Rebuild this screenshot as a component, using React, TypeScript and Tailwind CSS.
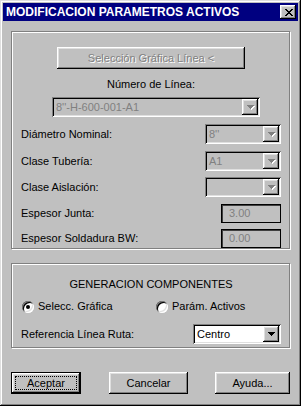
import React from "react";

const FONT = "font-['Liberation_Sans',Arial,sans-serif]";
const RAISED =
  "shadow-[inset_-1px_-1px_#000,inset_1px_1px_#fff,inset_-2px_-2px_#808080,inset_2px_2px_#dfdfdf]";
const SUNKEN =
  "shadow-[inset_1px_1px_#808080,inset_-1px_-1px_#fff,inset_2px_2px_#000,inset_-2px_-2px_#dfdfdf]";
const GROUP = "border border-[#808080] shadow-[inset_1px_1px_#fff,1px_1px_#fff]";
const DISABLED_TXT = "text-[#808080] [text-shadow:1px_1px_0_#fff]";

function Tri({ disabled }: { disabled?: boolean }) {
  const d = "M0 0h7v1h-1v1h-1v1h-1v1h-1v-1h-1v-1h-1v-1h-1z";
  return (
    <svg width="8" height="5" viewBox="0 0 8 5" shapeRendering="crispEdges">
      {disabled && <path d={d} fill="#fff" transform="translate(1 1)" />}
      <path d={d} fill={disabled ? "#808080" : "#000"} />
    </svg>
  );
}

function ArrowBtn({ disabled }: { disabled?: boolean }) {
  return (
    <div className={`w-[16px] h-[16px] bg-[#c0c0c0] ${RAISED} flex items-center justify-center pl-[1px] pt-[1px]`}>
      <Tri disabled={disabled} />
    </div>
  );
}

function Combo({
  value,
  disabled,
  className,
}: {
  value: string;
  disabled?: boolean;
  className?: string;
}) {
  return (
    <div
      className={`h-[20px] ${SUNKEN} ${disabled ? "bg-[#c0c0c0]" : "bg-white"} flex items-center pr-[2px] ${className ?? ""}`}
    >
      <span className={`flex-1 pl-[4px] leading-[13px] ${disabled ? "text-[#808080]" : "text-black"} whitespace-nowrap overflow-hidden`}>
        {value}
      </span>
      <ArrowBtn disabled={disabled} />
    </div>
  );
}

function Edit({ value }: { value: string }) {
  return (
    <div className="w-[60px] h-[19px] border border-black shadow-[inset_1px_1px_#404040] bg-[#c0c0c0] flex items-center pl-[7px] text-[#808080] leading-[13px]">
      {value}
    </div>
  );
}

function Radio({ checked }: { checked?: boolean }) {
  return (
    <div
      className={`w-[12px] h-[12px] rounded-full bg-white shadow-[inset_1px_1px_#808080,inset_-1px_-1px_#fff,inset_2px_2px_#000,inset_-2px_-2px_#dfdfdf] flex items-center justify-center`}
    >
      {checked && <div className="w-[4px] h-[4px] rounded-full bg-black" />}
    </div>
  );
}

function CloseX() {
  const rows = [
    [0, 1, 6, 7],
    [1, 2, 5, 6],
    [2, 3, 4, 5],
    [3, 4],
    [2, 3, 4, 5],
    [1, 2, 5, 6],
    [0, 1, 6, 7],
  ];
  return (
    <svg width="8" height="7" viewBox="0 0 8 7" shapeRendering="crispEdges">
      {rows.map((r, y) =>
        r.map((x) => <rect key={`${x}-${y}`} x={x} y={y} width="1" height="1" fill="#000" />)
      )}
    </svg>
  );
}

function Row({ label, children, mt }: { label: string; children: React.ReactNode; mt: string }) {
  return (
    <div className={`flex items-center justify-between ${mt}`}>
      <span className="leading-[13px] whitespace-nowrap">{label}</span>
      {children}
    </div>
  );
}

function Button({ label, w, isDefault }: { label: string; w: string; isDefault?: boolean }) {
  if (isDefault) {
    return (
      <div className={`${w} h-[22px] border border-black flex`}>
        <div className={`flex-1 bg-[#c0c0c0] ${RAISED} flex p-[3px]`}>
          <div className="flex-1 border border-dotted border-black flex items-center justify-center leading-[13px]">
            {label}
          </div>
        </div>
      </div>
    );
  }
  return (
    <div className={`${w} h-[22px] bg-[#c0c0c0] ${RAISED} flex items-center justify-center leading-[13px]`}>
      {label}
    </div>
  );
}

export default function App() {
  return (
    <div
      className={`w-[301px] h-[406px] bg-[#c0c0c0] p-[3px] flex flex-col ${FONT} text-[11px] text-black shadow-[inset_-1px_-1px_#000,inset_1px_1px_#dfdfdf,inset_-2px_-2px_#808080,inset_2px_2px_#fff]`}
    >
      {/* Title bar */}
      <div className="h-[18px] bg-[#000080] flex items-center pl-[3px] pr-[2px]">
        <span className="flex-1 text-white font-bold text-[12px] leading-[14px] whitespace-nowrap">
          MODIFICACION PARAMETROS ACTIVOS
        </span>
        <div className={`w-[16px] h-[14px] bg-[#c0c0c0] ${RAISED} flex items-center justify-center pl-[1px]`}>
          <CloseX />
        </div>
      </div>

      {/* Body */}
      <div className="flex flex-col px-[8px]">
        {/* Group 1 */}
        <div className={`mt-[10px] h-[218px] ${GROUP} flex flex-col pl-[9px] pr-[8px]`}>
          <div
            className={`mt-[15px] self-center w-[188px] h-[22px] bg-[#c0c0c0] ${RAISED} flex items-center justify-center leading-[13px] ${DISABLED_TXT}`}
          >
            Selección Gráfica Línea &lt;
          </div>
          <div className="mt-[9px] text-center leading-[13px]">Número de Línea:</div>
          <Combo value="8''-H-600-001-A1" disabled className="mt-[6px] ml-[31px] w-[208px]" />
          <Row label="Diámetro Nominal:" mt="mt-[7px]">
            <Combo value="8''" disabled className="w-[76px]" />
          </Row>
          <Row label="Clase Tubería:" mt="mt-[7px]">
            <Combo value="A1" disabled className="w-[76px]" />
          </Row>
          <Row label="Clase Aislación:" mt="mt-[6px]">
            <Combo value="" disabled className="w-[76px]" />
          </Row>
          <Row label="Espesor Junta:" mt="mt-[7px]">
            <Edit value="3.00" />
          </Row>
          <Row label="Espesor Soldadura BW:" mt="mt-[6px]">
            <Edit value="0.00" />
          </Row>
        </div>

        {/* Group 2 */}
        <div className={`mt-[14px] h-[85px] ${GROUP} flex flex-col pl-[9px] pr-[8px]`}>
          <div className="mt-[14px] text-center leading-[13px]">GENERACION COMPONENTES</div>
          <div className="mt-[9px] flex items-center h-[13px]">
            <div className="w-[135px] flex items-center gap-[4px] pl-[1px]">
              <Radio checked />
              <span className="leading-[13px]">Selecc. Gráfica</span>
            </div>
            <div className="flex items-center gap-[4px]">
              <Radio />
              <span className="leading-[13px]">Parám. Activos</span>
            </div>
          </div>
          <Row label="Referencia Línea Ruta:" mt="mt-[11px]">
            <Combo value="Centro" className="w-[88px]" />
          </Row>
        </div>

        {/* Buttons */}
        <div className="mt-[24px] flex items-center">
          <Button label="Aceptar" w="w-[70px]" isDefault />
          <div className="ml-[28px]">
            <Button label="Cancelar" w="w-[79px]" />
          </div>
          <div className="ml-[27px]">
            <Button label="Ayuda..." w="w-[75px]" />
          </div>
        </div>
      </div>
    </div>
  );
}
